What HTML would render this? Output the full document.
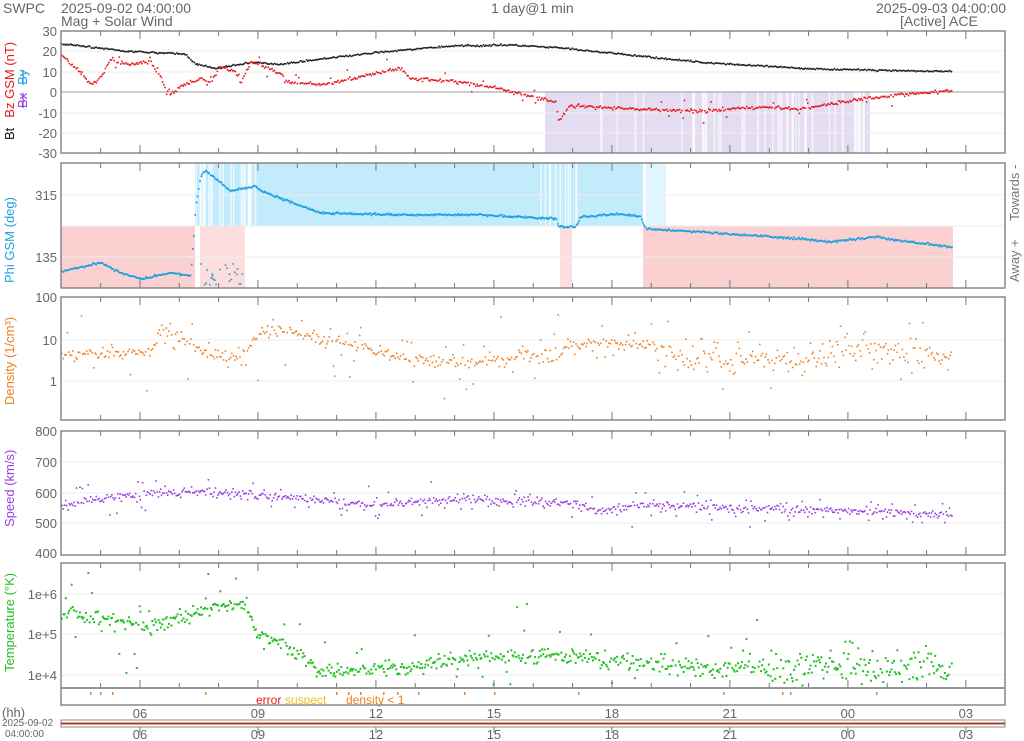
<!DOCTYPE html><html><head><meta charset="utf-8"><style>
html,body{margin:0;padding:0;background:#fff;width:1024px;height:741px;overflow:hidden}
svg{display:block;font-family:"Liberation Sans","DejaVu Sans",sans-serif}
</style></head><body>
<svg id="s" width="1024" height="741" viewBox="0 0 1024 741" xmlns="http://www.w3.org/2000/svg">
<defs><clipPath id="c"><rect x="61" y="31" width="944" height="122"/><rect x="61" y="163" width="944" height="125"/><rect x="61" y="297" width="944" height="123"/><rect x="61" y="431" width="944" height="124"/><rect x="61" y="563" width="944" height="125"/><rect x="61" y="688" width="944" height="17"/></clipPath></defs>
<g fill="#666" font-size="14">
<text x="3" y="13">SWPC</text>
<text x="61" y="13">2025-09-02 04:00:00</text>
<text x="61" y="26">Mag + Solar Wind</text>
<text x="491" y="13">1 day@1 min</text>
<text x="876" y="13">2025-09-03 04:00:00</text>
<text x="900" y="26">[Active] ACE</text>
</g>
<g id="bg" clip-path="url(#c)"></g><g id="grid"></g><g id="pts" clip-path="url(#c)"></g><g id="frames"></g>
<g font-size="13" fill="#666" text-anchor="end" id="ylab">
<text x="57" y="36">30</text><text x="57" y="56">20</text><text x="57" y="77">10</text><text x="57" y="97">0</text><text x="57" y="118">-10</text><text x="57" y="138">-20</text><text x="57" y="158">-30</text>
<text x="57" y="200">315</text><text x="57" y="262">135</text>
<text x="57" y="302">100</text><text x="57" y="345">10</text><text x="57" y="386">1</text>
<text x="57" y="436">800</text><text x="57" y="467">700</text><text x="57" y="498">600</text><text x="57" y="528">500</text><text x="57" y="558">400</text>
<text x="57" y="599">1e+6</text><text x="57" y="639">1e+5</text><text x="57" y="680">1e+4</text>
</g>
<g font-size="13">
<text transform="translate(14,140) rotate(-90)"><tspan fill="#111">Bt</tspan><tspan fill="#e8191c" dx="10">Bz GSM (nT)</tspan></text>
<text transform="translate(27,108) rotate(-90)"><tspan fill="#9a3ee0" text-decoration="line-through">Bx</tspan><tspan fill="#1fa0e0" dx="8" text-decoration="line-through">By</tspan></text>
<text transform="translate(14,283) rotate(-90)" fill="#1fa0e0">Phi GSM (deg)</text>
<text transform="translate(14,405) rotate(-90)" fill="#f08020">Density (1/cm³)</text>
<text transform="translate(14,527) rotate(-90)" fill="#9a3ee0">Speed (km/s)</text>
<text transform="translate(14,672) rotate(-90)" fill="#22c022">Temperature (°K)</text>
<text transform="translate(1019,221) rotate(-90)" fill="#777">Towards -</text>
<text transform="translate(1019,282) rotate(-90)" fill="#777">Away +</text>
</g>
<g font-size="12">
<text x="256" y="704" fill="#e8191c">error</text><text x="285" y="704" fill="#f0c020">suspect</text><text x="346" y="704" fill="#f08020">density &lt; 1</text>
</g>
<g font-size="13" fill="#666">
<text x="2" y="717">(hh)</text>
<text x="2" y="726" font-size="10">2025-09-02</text>
<text x="5" y="737" font-size="10">04:00:00</text>
</g>
<g id="xl" font-size="13" fill="#666" text-anchor="middle"></g>
</svg>
<script>
var X0=61.3,PH=39.33,X1=1005;
var NS="http://www.w3.org/2000/svg";
function el(p,t,a){var e=document.createElementNS(NS,t);for(var k in a)e.setAttribute(k,a[k]);document.getElementById(p).appendChild(e);return e}
var seed=7;function r(){seed=(seed*16807)%2147483647;return seed/2147483647}
function g(){return (r()+r()+r()-1.5)}
function interp(cp,x){for(var i=0;i<cp.length-1;i++){if(x<=cp[i+1][0]){var a=cp[i],b=cp[i+1];return a[1]+(b[1]-a[1])*(x-a[0])/(b[0]-a[0])}}return cp[cp.length-1][1]}
var panels=[[31,153],[163,288],[297,420],[431,555],[563,688],[688,705]];
el("bg","rect",{x:545,y:92,width:325,height:61,fill:"#e4ddf2"});
for(var i=0;i<40;i++){var xx=600+r()*280;el("bg","rect",{x:xx,y:92,width:1+r()*2,height:61,fill:"#fff",opacity:.6})}
el("bg","rect",{x:195,y:163,width:448,height:63,fill:"#c2ebfb"});
el("bg","rect",{x:646,y:163,width:20,height:63,fill:"#c2ebfb",opacity:.5});
el("bg","rect",{x:61,y:226,width:134,height:62,fill:"#fbd0d0"});
el("bg","rect",{x:643,y:226,width:310,height:62,fill:"#fbd0d0"});
el("bg","rect",{x:200,y:226,width:45,height:62,fill:"#fbd0d0",opacity:.7});
el("bg","rect",{x:560,y:226,width:12,height:62,fill:"#fbd0d0",opacity:.7});
for(var i=0;i<25;i++){el("bg","rect",{x:195+r()*60,y:163,width:1.5,height:63,fill:"#fff",opacity:.7})}
for(var i=0;i<12;i++){el("bg","rect",{x:540+r()*40,y:163,width:1.5,height:63,fill:"#fff",opacity:.7})}
[51,72,92,113,133,195,226,257,340,381,462,493,523,594,634,675].forEach(function(v){el("grid","line",{x1:61,x2:X1,y1:v,y2:v,stroke:v==92?"#999":"#eee","stroke-width":1})});
panels.forEach(function(p,k){el("frames","rect",{x:61,y:p[0],width:X1-61,height:p[1]-p[0],fill:"none",stroke:"#888","stroke-width":1.5});
 for(var h=1;h<24;h++){var x=X0+h*PH,m=(h+1)%3==0,L=m?8:5;
  if(k<5){el("frames","line",{x1:x,x2:x,y1:p[0],y2:p[0]+L,stroke:"#777"});el("frames","line",{x1:x,x2:x,y1:p[1]-L,y2:p[1],stroke:"#777"})}}});
el("frames","rect",{x:61,y:720,width:X1-61,height:7,fill:"none",stroke:"#888"});
el("frames","line",{x1:61,x2:X1,y1:723.5,y2:723.5,stroke:"#b04020","stroke-width":2});
["06","09","12","15","18","21","00","03"].forEach(function(t,i){var x=X0+(2+3*i)*PH;el("xl","text",{x:x,y:718}).textContent=t;el("xl","text",{x:x,y:739}).textContent=t;
 el("frames","line",{x1:x,x2:x,y1:727,y2:733,stroke:"#777"});});
function scat(cp,col,n,sd,x0,x1,tf,sz,out,sdR,pb){for(var i=0;i<n;i++){var x=x0+(x1-x0)*i/n+r()*0.5;var s=sd;if(sdR&&x>sdR[0])s=sdR[1];var v=interp(cp,x)+g()*s;if(out&&r()<out[0])v+=g()*out[1];var y=tf(v);if(pb&&(y<pb[0]+1||y>pb[1]-3))continue;el("pts","rect",{x:x.toFixed(1),y:y.toFixed(1),width:sz,height:sz,fill:col})}}
var mag=function(v){return 92-v*2.033};
scat([[60,24],[100,22],[120,20.5],[185,19],[195,14],[215,12],[240,14],[250,15],[280,14],[310,16],[380,20],[450,23],[510,23.5],[560,22],[620,19],[700,15],[800,12],[880,11],[950,10.5]],"#222",700,0.4,61,952,mag,1.6);
scat([[60,19],[80,10],[90,4],[100,8],[110,16],[130,14],[150,15],[160,8],[167,-2],[180,3],[200,7],[210,5],[220,13],[235,10],[240,5],[250,15],[260,14],[280,9],[290,5],[320,4],[380,10],[400,12],[410,7],[450,6],[500,2],[540,-3],[555,-4],[558,-14],[570,-6],[620,-8],[700,-9],[760,-7],[800,-8],[860,-3],[900,-1],[950,1]],"#e8191c",700,0.8,61,952,mag,1.6,[0.1,5],null,[31,153]);
scat([[60,271],[90,264],[100,262],[120,272],[140,278],[170,272],[190,275],[195,205],[200,175],[205,170],[230,190],[255,185],[260,190],[300,205],[320,212],[400,214],[480,214],[555,218],[558,226],[575,226],[580,216],[620,213],[640,216],[645,228],[700,231],[800,238],[830,241],[875,236],[900,240],[950,246]],"#1fa0e0",750,1,61,952,function(v){return v},1.8);
for(var i=0;i<25;i++)el("pts","rect",{x:200+r()*42,y:262+r()*24,width:1.6,height:1.6,fill:"#1fa0e0"});
var den=function(v){return 381-Math.log10(v)*41.5};
scat([[60,4.5],[150,5],[160,20],[180,12],[200,5],[240,4],[260,15],[280,18],[320,10],[380,6],[400,4],[450,3],[560,4],[565,8],[640,8],[700,3],[720,4],[800,3],[850,6],[950,4]].map(function(a){return [a[0],Math.log10(a[1])]}),"#f08020",650,0.15,61,952,function(v){return den(Math.pow(10,v))},1.6,[0.2,0.8],[700,0.35],[297,420]);
scat([[60,560],[100,580],[150,600],[220,600],[260,590],[330,570],[380,560],[460,580],[500,570],[560,570],[600,540],[640,560],[700,555],[800,545],[950,530]],"#9a3ee0",750,14,61,952,function(v){return 431+(800-v)*0.305},1.6,[0.2,50],null,[431,555]);
scat([[60,5.6],[150,5.2],[200,5.6],[245,5.8],[255,5.1],[300,4.5],[320,4.1],[400,4.2],[500,4.5],[580,4.5],[700,4.2],[800,4.2],[950,4.2]],"#22c022",750,0.18,61,952,function(v){return 675-(v-4)*40.5},2,[0.12,1.2],[740,0.4],[563,688]);
[90,100,112,205,336,348,360,383,397,418,464,494,578,723,782,790,876].forEach(function(x){el("pts","rect",{x:x,y:692,width:1.5,height:3,fill:"#f08020"})});
</script>
</body></html>
